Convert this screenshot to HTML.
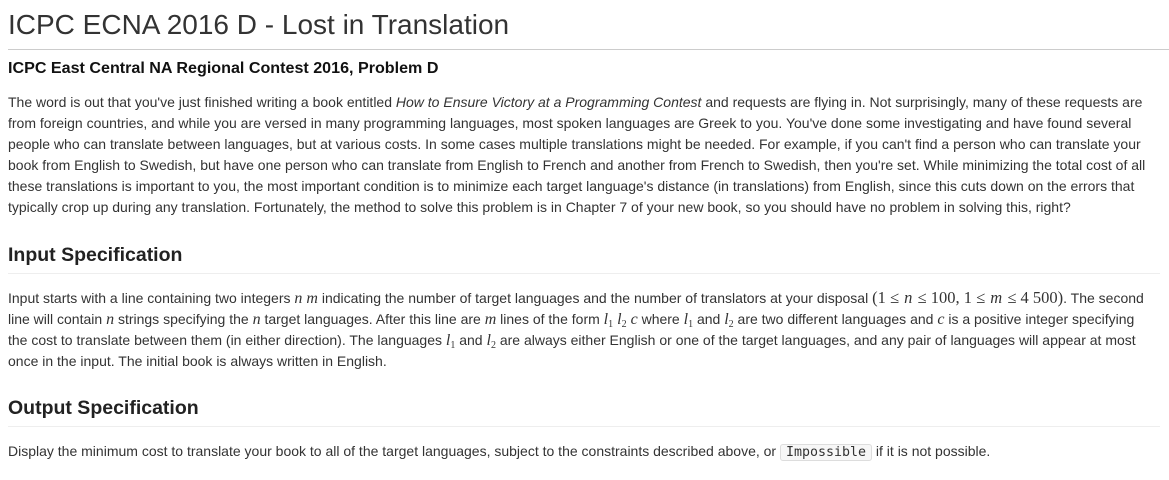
<!DOCTYPE html>
<html><head><meta charset="utf-8"><style>
body{margin:0;background:#fff;color:#333;font-family:"Liberation Sans",Arial,sans-serif;font-size:14px;width:1169px;height:480px;overflow:hidden;position:relative}
.a{position:absolute;left:8px;white-space:nowrap}
h1{position:absolute;left:8px;top:6px;margin:0;font-size:28px;font-weight:normal;line-height:38px;color:#333}
.hr1{position:absolute;left:8px;right:0;top:49px;border-top:1px solid #ccc}
.h2{font-weight:bold;font-size:16.1px;color:#111}
.h3{font-weight:bold;font-size:19.5px;color:#222}
.hr2{position:absolute;left:8px;width:1152px;border-top:1px solid #eee}
p{margin:0;line-height:21px}
.m{font-family:"Liberation Serif",serif;font-style:italic;font-size:16px}
.r{font-family:"Liberation Serif",serif;font-size:16.5px;word-spacing:0px}
.r i{padding:0 1px}
sub{font-size:10px;font-style:normal;vertical-align:-3px;line-height:0}
code{font-family:"DejaVu Sans Mono",monospace;font-size:13.3px;background:#f7f7f7;border:1px solid #ddd;border-radius:3px;padding:0 5px}
</style></head><body>
<h1>ICPC ECNA 2016 D - Lost in Translation</h1>
<div class="hr1"></div>
<div class="a h2" style="top:59px">ICPC East Central NA Regional Contest 2016, Problem D</div>
<p class="a" style="top:92px">The word is out that you've just finished writing a book entitled <i>How to Ensure Victory at a Programming Contest</i> and requests are flying in. Not surprisingly, many of these requests are<br>from foreign countries, and while you are versed in many programming languages, most spoken languages are Greek to you. You've done some investigating and have found several<br>people who can translate between languages, but at various costs. In some cases multiple translations might be needed. For example, if you can't find a person who can translate your<br>book from English to Swedish, but have one person who can translate from English to French and another from French to Swedish, then you're set. While minimizing the total cost of all<br>these translations is important to you, the most important condition is to minimize each target language's distance (in translations) from English, since this cuts down on the errors that<br>typically crop up during any translation. Fortunately, the method to solve this problem is in Chapter 7 of your new book, so you should have no problem in solving this, right?</p>
<div class="a h3" style="top:244px">Input Specification</div>
<div class="hr2" style="top:273px"></div>
<p class="a" style="top:287px">Input starts with a line containing two integers <span class="m">n m</span> indicating the number of target languages and the number of translators at your disposal <span class="r">(1 ≤ <i>n</i> ≤ 100, 1 ≤ <i>m</i> ≤ 4 500)</span>. The second<br>line will contain <span class="m">n</span> strings specifying the <span class="m">n</span> target languages. After this line are <span class="m">m</span> lines of the form <span class="m">l<sub>1</sub> l<sub>2</sub> c</span> where <span class="m">l<sub>1</sub></span> and <span class="m">l<sub>2</sub></span> are two different languages and <span class="m">c</span> is a positive integer specifying<br>the cost to translate between them (in either direction). The languages <span class="m">l<sub>1</sub></span> and <span class="m">l<sub>2</sub></span> are always either English or one of the target languages, and any pair of languages will appear at most<br>once in the input. The initial book is always written in English.</p>
<div class="a h3" style="top:397px">Output Specification</div>
<div class="hr2" style="top:426px"></div>
<p class="a" style="top:441px">Display the minimum cost to translate your book to all of the target languages, subject to the constraints described above, or <code>Impossible</code> if it is not possible.</p>
</body></html>
